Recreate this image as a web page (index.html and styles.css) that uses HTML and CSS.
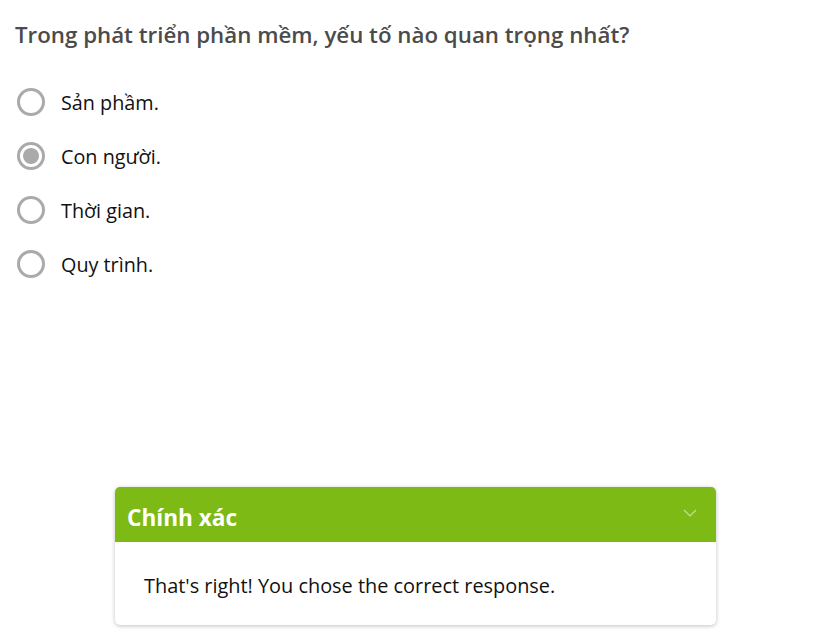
FILE: index.html
```html
<!DOCTYPE html>
<html>
<head>
<meta charset="utf-8">
<link rel="stylesheet" href="styles.css">
</head>
<body>
<div class="page">
  <h1 class="question">Trong phát triển phần mềm, yếu tố nào quan trọng nhất?</h1>
  <ul class="options">
    <li class="option"><span class="radio"></span><span class="label">Sản phầm.</span></li>
    <li class="option"><span class="radio checked"></span><span class="label">Con người.</span></li>
    <li class="option"><span class="radio"></span><span class="label">Thời gian.</span></li>
    <li class="option"><span class="radio"></span><span class="label">Quy trình.</span></li>
  </ul>
  <div class="feedback-wrap">
    <div class="feedback">
      <div class="fb-header">
        <span class="fb-title">Chính xác</span>
        <svg class="chev" width="14" height="8" viewBox="0 0 14 8"><path d="M1 1 L7 7 L13 1" fill="none" stroke="rgba(255,255,255,0.55)" stroke-width="1.2"/></svg>
      </div>
      <div class="fb-body">That's right! You chose the correct response.</div>
    </div>
  </div>
</div>
</body>
</html>
```
FILE: styles.css
```css
html, body { margin: 0; padding: 0; background: #fff; }
body { font-family: "Open Sans", "Noto Sans", sans-serif; }
.page { width: 830px; height: 636px; display: flex; flex-direction: column; }
.question {
  margin: 20px 0 0 15px;
  font-size: 22.3px;
  font-weight: 600;
  color: #4b4b4b;
  line-height: 30px;
}
.options { list-style: none; margin: 25px 0 0 0; padding: 0; }
.option { display: flex; align-items: center; height: 54px; padding-left: 17px; }
.radio {
  width: 22px; height: 22px; border: 3px solid #aaaaaa; border-radius: 50%;
  box-sizing: content-box; display: flex; align-items: center; justify-content: center;
  margin-right: 16px;
}
.radio.checked::after {
  content: ""; width: 16px; height: 16px; border-radius: 50%; background: #aaaaaa;
}
.label { font-size: 19.8px; color: #111; }
.feedback-wrap { flex: 1; display: flex; align-items: flex-end; justify-content: center; padding-bottom: 11px; padding-left: 1px; }
.feedback {
  width: 601px; border-radius: 5px; overflow: hidden; background: #fff;
  box-shadow: 0 1px 4px rgba(0,0,0,0.25);
}
.fb-header {
  background: #7dba15; height: 55px; display: flex; align-items: center; justify-content: space-between;
  padding: 5px 19px 0 12px; box-sizing: border-box;
}
.fb-title { color: #fff; font-weight: 700; font-size: 22.6px; }
.chev { margin-top: -8px; }
.fb-body { height: 83px; display: flex; align-items: center; padding: 4px 0 0 29px; box-sizing: border-box; font-size: 19.9px; color: #111; }
```
